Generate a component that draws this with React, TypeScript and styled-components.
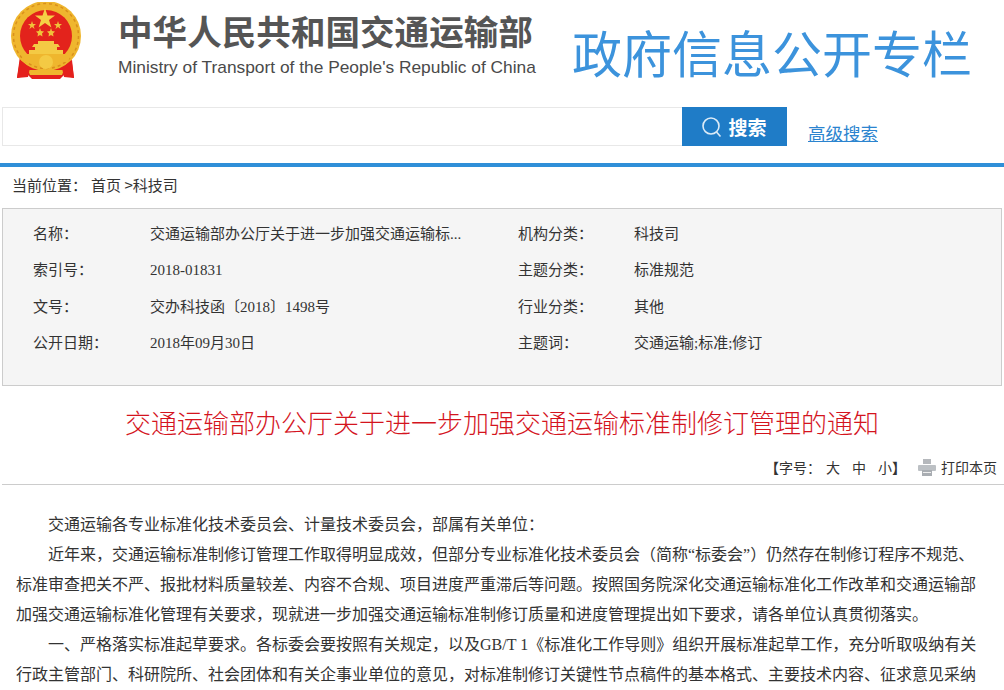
import { createGlobalStyle, styled } from 'styled-components';

const cjk = '"Noto Sans CJK SC", sans-serif';
const bodyFont = `"Liberation Serif", "Noto Sans CJK SC", serif`;

const rows = [
  { label: '名称：', value: '交通运输部办公厅关于进一步加强交通运输标...', label2: '机构分类：', value2: '科技司' },
  { label: '索引号：', value: '2018-01831', label2: '主题分类：', value2: '标准规范' },
  { label: '文号：', value: '交办科技函〔2018〕1498号', label2: '行业分类：', value2: '其他' },
  { label: '公开日期：', value: '2018年09月30日', label2: '主题词：', value2: '交通运输;标准;修订' },
];

const paragraphs = [
  '交通运输各专业标准化技术委员会、计量技术委员会，部属有关单位：',
  '近年来，交通运输标准制修订管理工作取得明显成效，但部分专业标准化技术委员会（简称“标委会”）仍然存在制修订程序不规范、标准审查把关不严、报批材料质量较差、内容不合规、项目进度严重滞后等问题。按照国务院深化交通运输标准化工作改革和交通运输部加强交通运输标准化管理有关要求，现就进一步加强交通运输标准制修订质量和进度管理提出如下要求，请各单位认真贯彻落实。',
  '一、严格落实标准起草要求。各标委会要按照有关规定，以及GB/T 1《标准化工作导则》组织开展标准起草工作，充分听取吸纳有关行政主管部门、科研院所、社会团体和有关企事业单位的意见，对标准制修订关键性节点稿件的基本格式、主要技术内容、征求意见采纳',
];

function Emblem() {
  return (
    <svg width="76" height="80" viewBox="0 0 76 80">
      <path d="M12 54 L9 76 L20 73 L24 77 L52 77 L56 73 L66 76 L63 54 Z" fill="#e4201c" />
      <circle cx="38" cy="34" r="35" fill="#efb62e" />
      <circle cx="38" cy="34" r="32.5" fill="none" stroke="#d9901c" strokeWidth="1.5" strokeDasharray="3 3" />
      <circle cx="38" cy="34" r="26" fill="#e3231c" />
      <polygon points="37,6 39.5,13.5 47,13.5 41,18 43.4,25.5 37,21 30.6,25.5 33,18 27,13.5 34.5,13.5" fill="#f5cf45" />
      <polygon points="24,19 25,22 28,22 25.6,24 26.6,27 24,25 21.4,27 22.4,24 20,22 23,22" fill="#f0c23a" />
      <polygon points="50,19 51,22 54,22 51.6,24 52.6,27 50,25 47.4,27 48.4,24 46,22 49,22" fill="#f0c23a" />
      <polygon points="32,26 33,29 36,29.5 34,31.5 34.5,34.5 32,33 29.5,34.5 30,31.5 28,29.5 31,29" fill="#f0c23a" />
      <polygon points="43,26 44,29 47,29.5 45,31.5 45.5,34.5 43,33 40.5,34.5 41,31.5 39,29.5 42,29" fill="#f0c23a" />
      <path d="M30 39 H46 V42 H30 Z M26 42 H50 L52 45 H24 Z M27 45 H49 V48 H27 Z M21 48 H55 V52 H21 Z" fill="#f4ca44" />
      <path d="M13 52 H63 L60 60 H16 Z" fill="#efb62e" />
      <circle cx="38" cy="60" r="7" fill="#f4ca44" />
      <path d="M20 68 H56 L54 73 H22 Z" fill="#efb62e" />
      <path d="M12 58 L22 66 L20 75 L9 76 Z M64 58 L54 66 L56 75 L66 76 Z" fill="#e4201c" />
    </svg>
  );
}

function SearchIcon() {
  return (
    <svg width="20" height="22" viewBox="0 0 20 22" fill="none" stroke="#dcebf7" strokeWidth="1.6">
      <circle cx="9" cy="10" r="8" />
      <path d="M14.5 16 L18.5 20.5" />
    </svg>
  );
}

function PrinterIcon() {
  return (
    <svg width="18" height="17" viewBox="0 0 18 17">
      <rect x="5" y="0" width="8" height="5" fill="#b5b8bc" />
      <rect x="0" y="6" width="18" height="6" rx="1" fill="#bcc0c4" />
      <rect x="4" y="11" width="10" height="6" fill="#a9adb2" />
      <rect x="5" y="13" width="8" height="1" fill="#eee" />
    </svg>
  );
}

export default function App() {
  return (
    <>
      <GlobalStyle />
      <Page>
        <Header>
          <EmblemSlot>
            <Emblem />
          </EmblemSlot>
          <MinistryName>
            <ChineseName>中华人民共和国交通运输部</ChineseName>
            <EnglishName>Ministry of Transport of the People's Republic of China</EnglishName>
          </MinistryName>
          <ColumnName>政府信息公开专栏</ColumnName>
        </Header>
        <SearchBar>
          <SearchInput />
          <SearchButton>
            <SearchIcon />
            搜索
          </SearchButton>
          <AdvancedLink href="#">高级搜索</AdvancedLink>
        </SearchBar>
        <Breadcrumb>
          <span>当前位置：</span>
          <span>首页 &gt;科技司</span>
        </Breadcrumb>
        <InfoBox>
          {rows.map((row) => (
            <InfoRow key={row.label}>
              <InfoCell>{row.label}</InfoCell>
              <InfoCell>{row.value}</InfoCell>
              <InfoCell>{row.label2}</InfoCell>
              <InfoCell>{row.value2}</InfoCell>
            </InfoRow>
          ))}
        </InfoBox>
        <ArticleTitle>交通运输部办公厅关于进一步加强交通运输标准制修订管理的通知</ArticleTitle>
        <Tools>
          <strong>【</strong>字号：
          <FontSizes>
            <span>大</span>
            <span>中</span>
            <span>小</span>
          </FontSizes>
          <strong>】</strong>
          <PrintLink>
            <PrinterIcon />
            打印本页
          </PrintLink>
        </Tools>
        <Article>
          {paragraphs.map((text) => (
            <p key={text.slice(0, 8)}>{text}</p>
          ))}
        </Article>
      </Page>
    </>
  );
}

const GlobalStyle = createGlobalStyle`
  html, body {
    margin: 0;
    height: 690px;
    overflow: hidden;
    background: #fff;
  }
`;

const Page = styled.div`
  width: 1004px;
  font-family: ${bodyFont};
  color: #333;
`;

const Header = styled.header`
  display: flex;
  height: 107px;
`;

const EmblemSlot = styled.div`
  width: 118px;
  padding: 2px 0 0 8px;
  box-sizing: border-box;
`;

const MinistryName = styled.div`
  width: 454px;
  padding-top: 9px;
  box-sizing: border-box;
`;

const ChineseName = styled.div`
  font: 700 34.6px/42px ${cjk};
  color: #555;
  white-space: nowrap;
`;

const EnglishName = styled.div`
  margin-top: 6px;
  font: 17.35px/20px 'Liberation Sans', sans-serif;
  color: #4a4a4a;
  white-space: nowrap;
`;

const ColumnName = styled.div`
  padding-top: 19px;
  font: 400 50px/64px ${cjk};
  color: #3c93dc;
  white-space: nowrap;
`;

const SearchBar = styled.div`
  display: flex;
  height: 56px;
  padding-left: 2px;
  border-bottom: 4px solid #2f8fd8;
`;

const SearchInput = styled.div`
  width: 680px;
  height: 39px;
  box-sizing: border-box;
  border: 1px solid #e8e8e8;
  border-right: 0;
`;

const SearchButton = styled.div`
  display: flex;
  align-items: center;
  justify-content: center;
  gap: 6px;
  width: 105px;
  height: 39px;
  background: #1f7cc7;
  color: #fff;
  font: 700 19px ${cjk};
`;

const AdvancedLink = styled.a`
  margin: 13px 0 0 21px;
  height: 25px;
  font: 17.5px/25px ${cjk};
  color: #2b84cf;
`;

const Breadcrumb = styled.div`
  display: flex;
  gap: 4px;
  height: 41px;
  padding-left: 12px;
  font: 15px/36px ${cjk};
  color: #333;
`;

const InfoBox = styled.div`
  margin: 0 2px;
  height: 178px;
  box-sizing: border-box;
  padding-top: 7px;
  border: 1px solid #ccc;
  background: #f5f5f5;
`;

const InfoRow = styled.div`
  display: grid;
  grid-template-columns: 117px 368px 116px 1fr;
  height: 36.4px;
  padding-left: 30px;
`;

const InfoCell = styled.div`
  font-size: 15px;
  line-height: 36px;
  color: #333;
`;

const ArticleTitle = styled.h1`
  margin: 0;
  height: 72px;
  font: 300 26px/72px ${cjk};
  color: #d4141e;
  text-align: center;
`;

const Tools = styled.div`
  display: flex;
  justify-content: flex-end;
  align-items: center;
  height: 19px;
  padding: 0 7px 7px 0;
  margin-left: 2px;
  border-bottom: 1px solid #ccc;
  font: 14px/19px ${cjk};
  color: #333;
`;

const FontSizes = styled.span`
  display: flex;
  gap: 12px;
  margin-left: 5px;
`;

const PrintLink = styled.span`
  display: flex;
  align-items: center;
  gap: 5px;
  margin-left: 12px;
`;

const Article = styled.div`
  padding: 25px 24px 0 16px;

  p {
    margin: 0;
    font: 16px/30px ${bodyFont};
    text-indent: 2em;
    color: #333;
  }
`;
